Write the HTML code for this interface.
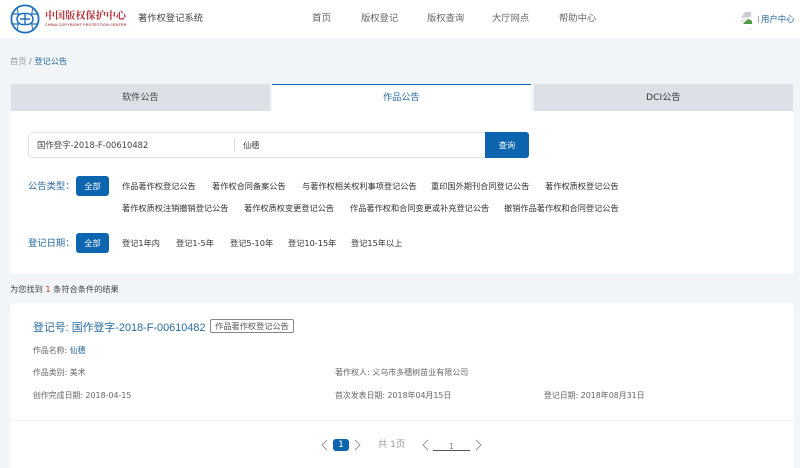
<!DOCTYPE html>
<html lang="zh"><head><meta charset="utf-8"><style>
html,body{margin:0;padding:0}
body{width:800px;height:468px;overflow:hidden;position:relative;background:#f1f5f8;font-family:"DejaVu Sans","Noto Sans CJK SC",sans-serif;font-size:8.2px;color:#333}
.a{position:absolute;white-space:nowrap}
.t{position:absolute;white-space:nowrap;line-height:12px;height:12px}
.btn{position:absolute;background:#0c65ae;color:#fff;border-radius:3px;text-align:center}
.g{color:#666;font-size:7.9px}.b{color:#2a6a9e}
</style></head><body>
<div class="a" style="left:0;top:0;width:800px;height:38px;background:#fff"></div>
<svg class="a" style="left:9px;top:4px" width="32" height="30" viewBox="0 0 32 30" fill="none" stroke="#1f6fc0">
<circle cx="16" cy="15" r="13.6" stroke-width="1.8"/>
<path d="M8 3Q11 15 8 27M24 3Q21 15 24 27" stroke-width="1"/>
<path d="M3 10H10M22 10H29M3 20H10M22 20H29" stroke-width="1.2"/>
<rect x="8" y="9.5" width="16" height="11" rx="5.5" stroke-width="1.5" fill="#fff"/>
<path d="M16 9.5V20.5M11 15H21" stroke-width="1.4"/>
</svg>
<div class="t" style="left:45px;top:8px;line-height:14px;height:14px;font-size:10px;letter-spacing:.15px;color:#b03038;font-family:'Noto Serif CJK SC',serif;font-weight:bold">中国版权保护中心</div>
<div class="t" style="left:45px;top:19px;font-size:3.8px;color:#b85a5f;font-family:'Liberation Sans',sans-serif;font-weight:bold;letter-spacing:.1px">CHINA COPYRIGHT PROTECTION CENTER</div>
<div class="t" style="left:138px;top:13px;font-size:9.3px;color:#444">著作权登记系统</div>

<div class="t" style="color:#666;left:312px;top:13px;font-size:9.6px">首页</div>
<div class="t" style="color:#666;left:361px;top:13px;font-size:9.3px">版权登记</div>
<div class="t" style="color:#666;left:427px;top:13px;font-size:9.3px">版权查询</div>
<div class="t" style="color:#666;left:492px;top:13px;font-size:9.3px">大厅网点</div>
<div class="t" style="color:#666;left:559px;top:13px;font-size:9.3px">帮助中心</div>

<svg class="a" style="left:739px;top:9px" width="16" height="21" viewBox="0 0 16 21">
<path d="M2 9L6 3H12V8Z" fill="#c9ccd0"/>
<path d="M2 10H13V14H2Z" fill="#e8ebe6"/>
<path d="M4 15L9 10L13 12V15Z" fill="#4f9a45"/>
<path d="M8 20H13" stroke="#e3e3e3"/>
</svg>
<div class="a" style="left:758px;top:16px;width:1px;height:7px;background:#aab"></div>
<div class="t b" style="left:761px;top:13px;font-size:8.4px">用户中心</div>

<div class="t" style="left:10px;top:55px;color:#999">首页 <span style="color:#777">/</span> <span class="b">登记公告</span></div>

<!-- tabs -->
<div class="a" style="left:11px;top:84px;width:259px;height:27px;background:#dbe1e6"></div>
<div class="a" style="left:534px;top:84px;width:259px;height:27px;background:#dbe1e6"></div>
<div class="a" style="left:10px;top:111px;width:784px;height:163px;background:#fff"></div>
<div class="a" style="left:272px;top:84px;width:259px;height:27px;background:#fff;border-top:1px solid #0c65ae;box-sizing:border-box"></div>
<div class="t" style="left:122px;top:92px;font-size:9.2px;color:#444">软件公告</div>
<div class="t b" style="left:383px;top:92px;font-size:9.2px">作品公告</div>
<div class="t" style="left:646px;top:92px;font-size:9.2px;color:#333">DCI公告</div>

<!-- search -->
<div class="a" style="left:28px;top:132px;width:458px;height:26px;box-sizing:border-box;border:1px solid #e2e4e6;border-radius:4px 0 0 4px;background:#fff"></div>
<div class="a" style="left:234px;top:138px;width:1px;height:14px;background:#dcdcdc"></div>
<div class="t" style="left:37px;top:139px;font-size:8.4px;color:#444">国作登字-2018-F-00610482</div>
<div class="t" style="left:243px;top:139px;color:#444">仙穗</div>
<div class="btn" style="left:485px;top:132px;width:44px;height:26px;line-height:26px;border-radius:0 3px 3px 0">查询</div>

<!-- filters -->
<div class="t b" style="left:28px;top:181px;font-size:9.3px">公告类型：</div>
<div class="btn" style="left:76px;top:176px;width:33px;height:20px;line-height:20px">全部</div>
<div class="t" style="left:122px;top:180px">作品著作权登记公告</div>
<div class="t" style="left:212px;top:180px">著作权合同备案公告</div>
<div class="t" style="left:302px;top:180px">与著作权相关权利事项登记公告</div>
<div class="t" style="left:431px;top:180px">重印国外期刊合同登记公告</div>
<div class="t" style="left:545px;top:180px">著作权质权登记公告</div>
<div class="t" style="left:122px;top:202px">著作权质权注销撤销登记公告</div>
<div class="t" style="left:244px;top:202px">著作权质权变更登记公告</div>
<div class="t" style="left:350px;top:202px">作品著作权和合同变更或补充登记公告</div>
<div class="t" style="left:504px;top:202px">撤销作品著作权和合同登记公告</div>

<div class="t b" style="left:28px;top:238px;font-size:9.3px">登记日期：</div>
<div class="btn" style="left:76px;top:233px;width:33px;height:20px;line-height:20px">全部</div>
<div class="t" style="left:122px;top:237px">登记1年内</div>
<div class="t" style="left:176px;top:237px">登记1-5年</div>
<div class="t" style="left:230px;top:237px">登记5-10年</div>
<div class="t" style="left:288px;top:237px">登记10-15年</div>
<div class="t" style="left:351px;top:237px">登记15年以上</div>

<div class="t" style="left:10px;top:283px;color:#444">为您找到 <span style="color:#c0392b">1</span> 条符合条件的结果</div>

<!-- result card -->
<div class="a" style="left:10px;top:303px;width:784px;height:165px;background:#fff;border-radius:3px 3px 0 0"></div>
<div class="t b" style="left:33px;top:321px;font-family:'Liberation Sans','Noto Sans CJK SC',sans-serif;font-size:10.9px;line-height:14px;height:14px">登记号: 国作登字-2018-F-00610482</div>
<div class="a" style="left:210px;top:319px;width:84px;height:14px;box-sizing:border-box;border:1px solid #888;border-radius:2px;line-height:12px;text-align:center;color:#555">作品著作权登记公告</div>
<div class="t g" style="left:33px;top:345px">作品名称: <span class="b">仙穗</span></div>
<div class="t g" style="left:33px;top:367px">作品类别: 美术</div>
<div class="t g" style="left:33px;top:390px">创作完成日期: 2018-04-15</div>
<div class="t g" style="left:335px;top:367px;font-size:8px">著作权人: 义乌市多穗树苗业有限公司</div>
<div class="t g" style="left:335px;top:390px">首次发表日期: 2018年04月15日</div>
<div class="t g" style="left:544px;top:390px">登记日期: 2018年08月31日</div>
<div class="a" style="left:10px;top:420px;width:784px;height:1px;background:#f0f2f4"></div>

<!-- pagination -->
<svg class="a" style="left:320px;top:439px" width="170" height="12" viewBox="0 0 170 12" fill="none" stroke="#999" stroke-width="1">
<path d="M7 1L2 6L7 11M35 1L40 6L35 11M108 1L103 6L108 11M156 1L161 6L156 11"/>
</svg>
<div class="btn" style="left:333px;top:439px;width:16px;height:12px;line-height:12px;font-size:9px">1</div>
<div class="t" style="left:378px;top:439px;font-size:9.2px;color:#999">共 1页</div>
<div class="t" style="left:433px;top:440px;width:37px;text-align:center;color:#888">1</div>
<div class="a" style="left:433px;top:450px;width:37px;height:1px;background:#555"></div>
</body></html>
